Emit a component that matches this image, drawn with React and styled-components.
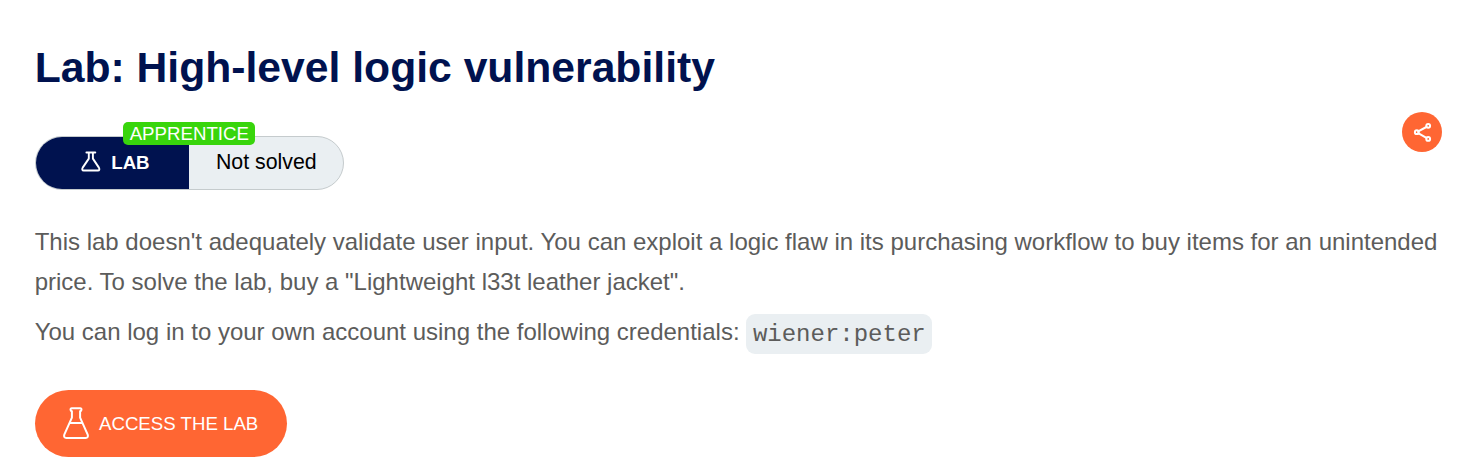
import React from "react";
import styled, { createGlobalStyle } from "styled-components";

const GlobalStyle = createGlobalStyle`
  * { box-sizing: border-box; }
  body {
    margin: 0;
    background: #fff;
    font-family: "Liberation Sans", Arial, sans-serif;
  }
`;

const Page = styled.main`
  padding: 43px 35px 0 34.67px;
`;

const Title = styled.h1`
  margin: 0;
  color: #00124f;
  font-size: 42.67px;
  font-weight: 700;
  line-height: 48px;
  white-space: nowrap;
`;

const StatusRow = styled.div`
  display: flex;
  justify-content: space-between;
  align-items: flex-start;
  height: 78px;
  margin-top: 21px;
`;

const StatusPill = styled.div`
  position: relative;
  display: flex;
  width: 309px;
  height: 54px;
  margin-top: 24px;
  border: 1px solid #c5cbcd;
  border-radius: 27px;
  background: #eaeff2;
`;

const LabLabel = styled.span`
  display: flex;
  align-items: center;
  width: 153px;
  padding-left: 44px;
  gap: 9.6px;
  border-radius: 26px 0 0 26px;
  background: #00124f;
  color: #fff;
  font-size: 18.67px;
  font-weight: 700;
`;

const StatusText = styled.span`
  flex: 1;
  padding-left: 27.3px;
  color: #000;
  font-size: 21.33px;
  line-height: 51px;
  white-space: nowrap;
`;

const LevelBadge = styled.span`
  position: absolute;
  top: -15px;
  left: 87px;
  width: 132px;
  height: 23px;
  padding-left: 7px;
  border-radius: 5px;
  background: #38d50c;
  color: #fff;
  font-size: 18.67px;
  line-height: 24px;
  white-space: nowrap;
`;

const ShareButton = styled.button`
  display: flex;
  align-items: center;
  justify-content: center;
  width: 40px;
  height: 40px;
  padding: 0;
  border: 0;
  border-radius: 50%;
  background: #ff6633;
`;

const Description = styled.section`
  margin-top: 32px;
  color: #5c5c5b;
  font-size: 24px;
  line-height: 40px;
`;

const Paragraph = styled.p`
  margin: 0 0 10px;
`;

const Credentials = styled.code`
  display: inline-block;
  height: 40px;
  padding: 0 6.67px;
  border-radius: 9px;
  background: #eaeff2;
  font-family: "Liberation Mono", monospace;
  font-size: 24px;
  line-height: 42px;
  vertical-align: top;
  margin-top: 2px;
`;

const AccessButton = styled.a`
  display: flex;
  align-items: center;
  width: 252px;
  height: 67px;
  margin-top: 36px;
  padding-left: 27.33px;
  gap: 9px;
  border-radius: 33.5px;
  background: #ff6633;
  color: #fff;
  font-size: 18.67px;
  white-space: nowrap;
`;

const Icon = styled.svg`
  display: block;
  flex: none;
  fill: none;
  stroke: #fff;
  stroke-width: ${(p) => p.$weight};
  stroke-linecap: round;
  stroke-linejoin: round;
`;

const SmallFlask = () => (
  <Icon $weight={1.9} width="22" height="24" viewBox="0 0 22 24">
    <path d="M6.4 1.5H15.3M8.8 1.8V7.6L2.7 16.6C1.8 18.2 2.2 19.5 3.7 19.5H17.9C19.4 19.5 19.8 18.2 18.9 16.6L12.9 7.6V1.8" />
  </Icon>
);

const LargeFlask = () => (
  <Icon $weight={2} width="28" height="34" viewBox="0 0 28 34">
    <path d="M9.7 1.3H18.3C19.9 1.3 19.9 3.9 18.1 4.3V10.6L25.7 27.6C26.4 29.6 25.5 31.1 23.7 31.1H4.3C2.5 31.1 1.6 29.6 2.3 27.6L9.9 10.6V4.3C8.1 3.9 8.1 1.3 9.7 1.3ZM7.9 16H20.2" />
  </Icon>
);

const ShareIcon = () => (
  <Icon $weight={2} width="20" height="20" viewBox="0 0 20 20">
    <path d="M6.2 9.3L14.4 5M6.2 11.1L14.4 15.8" />
    <circle cx="4.8" cy="10.2" r="1.9" />
    <circle cx="16.2" cy="3.8" r="1.9" />
    <circle cx="16.2" cy="16.9" r="1.9" />
  </Icon>
);

export default function App() {
  return (
    <>
      <GlobalStyle />
      <Page>
        <Title>Lab: High-level logic vulnerability</Title>
        <StatusRow>
          <StatusPill>
            <LabLabel>
              <SmallFlask />
              LAB
            </LabLabel>
            <StatusText>Not solved</StatusText>
            <LevelBadge>APPRENTICE</LevelBadge>
          </StatusPill>
          <ShareButton aria-label="Share">
            <ShareIcon />
          </ShareButton>
        </StatusRow>
        <Description>
          <Paragraph>
            This lab doesn't adequately validate user input. You can exploit a logic flaw in its
            purchasing workflow to buy items for an unintended price. To solve the lab, buy a
            "Lightweight l33t leather jacket".
          </Paragraph>
          <Paragraph>
            You can log in to your own account using the following credentials:{" "}
            <Credentials>wiener:peter</Credentials>
          </Paragraph>
        </Description>
        <AccessButton>
          <LargeFlask />
          ACCESS THE LAB
        </AccessButton>
      </Page>
    </>
  );
}
